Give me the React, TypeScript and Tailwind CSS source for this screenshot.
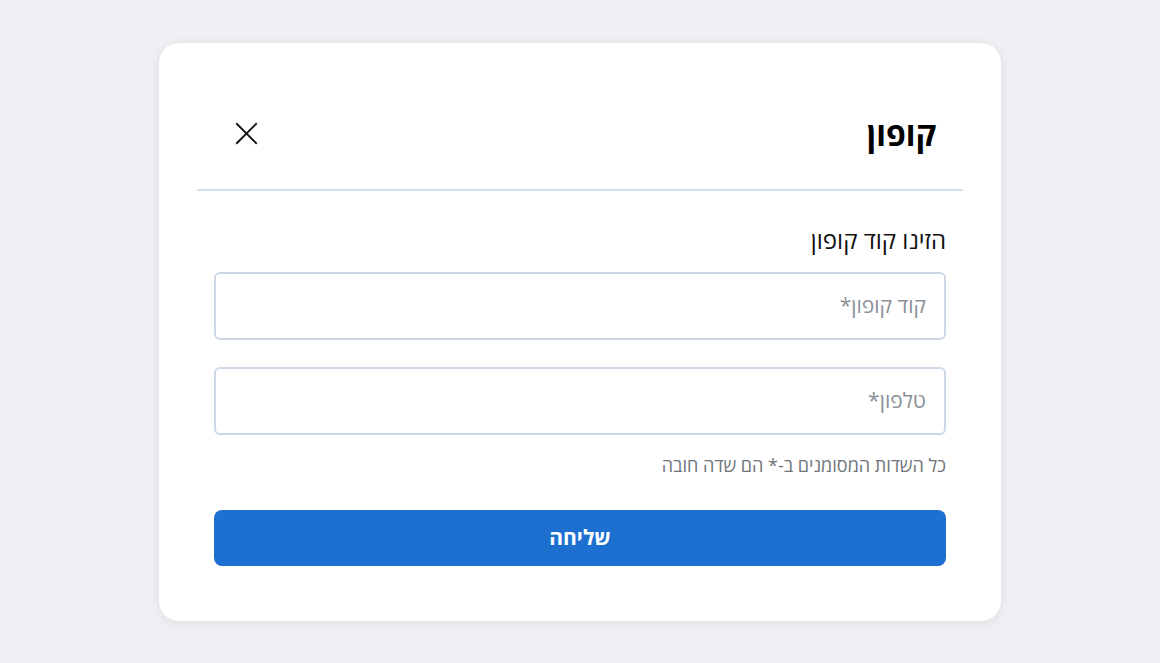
import React from "react";

export default function App() {
  return (
    <div
      dir="rtl"
      className="w-[1160px] h-[663px] bg-[#eef0f4] flex items-center justify-center"
      style={{ fontFamily: '"Open Sans", "Liberation Sans", "DejaVu Sans", sans-serif' }}
    >
      <div className="w-[842px] h-[578px] bg-white rounded-[20px] shadow-[0_2px_12px_rgba(0,0,0,0.08)] px-[38px] pt-[62px] pb-[54px] flex flex-col">
        <div className="flex items-center justify-between h-[58px] px-[27px] box-content pb-[26px] border-b-2 border-[#d3dee8]">
          <h1 className="text-[32px] font-bold text-black leading-none">קופון</h1>
          <button className="w-[44px] h-[44px] flex items-center justify-center">
            <svg width="23" height="23" viewBox="0 0 24 24" fill="none" stroke="#111" strokeWidth="2" strokeLinecap="square">
              <path d="M2 2L22 22M22 2L2 22" />
            </svg>
          </button>
        </div>
        <div className="px-[17px] flex flex-col">
          <div className="mt-[34px] text-[24px] leading-[30px] text-[#111]">הזינו קוד קופון</div>
          <div className="mt-[17px] h-[68px] rounded-[6px] border-2 border-[#cdd8e4] flex items-center pr-[18px] pl-[20px] text-[21px] text-[#8a9097]">
            קוד קופון*
          </div>
          <div className="mt-[27px] h-[68px] rounded-[6px] border-2 border-[#cdd8e4] flex items-center pr-[18px] pl-[20px] text-[21px] text-[#8a9097]">
            טלפון*
          </div>
          <div className="mt-[18px] text-[18px] leading-[24px] text-[#6f757b]">כל השדות המסומנים ב-* הם שדה חובה</div>
          <button className="mt-[33px] h-[56px] rounded-[8px] bg-[#1e70d0] text-white text-[21px] font-bold flex items-center justify-center">
            שליחה
          </button>
        </div>
      </div>
    </div>
  );
}
